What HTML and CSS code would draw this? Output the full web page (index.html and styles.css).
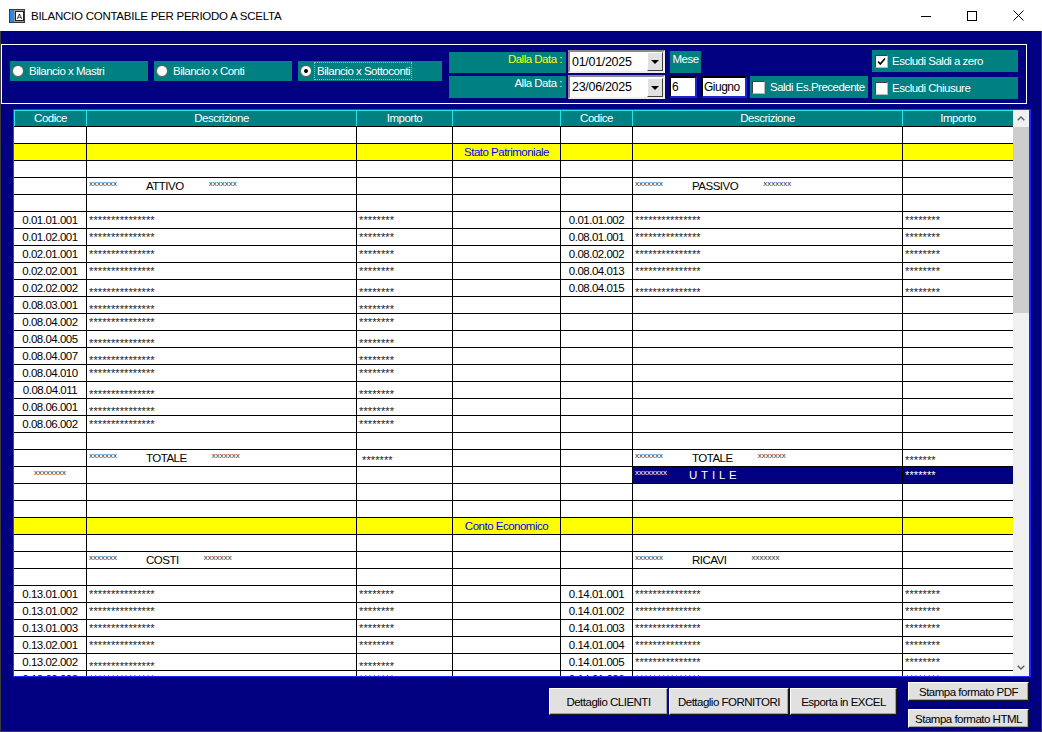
FILE: index.html
```html
<!DOCTYPE html>
<html lang="it">
<head>
<meta charset="utf-8">
<title>Bilancio contabile per periodo a scelta</title>
<link rel="stylesheet" href="styles.css">
</head>
<body>
<div class="window">
  <header class="titlebar">
    <svg class="app-icon" width="16" height="14" viewBox="0 0 16 14">
      <rect x="0.5" y="0.5" width="15" height="13" fill="#9a9a9a" stroke="#3a3a3a"/>
      <rect x="1" y="1" width="4" height="12" fill="#2f86e0"/>
      <rect x="6.5" y="2.5" width="8" height="9" fill="#ffffff" stroke="#202020"/>
      <text x="10.5" y="10" font-size="8" text-anchor="middle" font-family="Liberation Sans, Arial, sans-serif" fill="#000">A</text>
    </svg>
    <span class="title">BILANCIO CONTABILE PER PERIODO A SCELTA</span>
    <div class="wincontrols">
      <span class="wbtn"><svg width="10" height="10" viewBox="0 0 10 10"><line x1="0" y1="5.5" x2="10" y2="5.5" stroke="#000" stroke-width="1"/></svg></span>
      <span class="wbtn"><svg width="10" height="10" viewBox="0 0 10 10"><rect x="0.5" y="0.5" width="9" height="9" fill="none" stroke="#000" stroke-width="1"/></svg></span>
      <span class="wbtn"><svg width="11" height="11" viewBox="0 0 11 11"><path d="M0.5 0.5L10.5 10.5M10.5 0.5L0.5 10.5" stroke="#000" stroke-width="1" fill="none"/></svg></span>
    </div>
  </header>

  <main class="client">
    <section class="filters">
      <label class="radio"><span class="dot"></span><span>Bilancio x Mastri</span></label>
      <label class="radio"><span class="dot"></span><span>Bilancio x Conti</span></label>
      <label class="radio wide"><span class="dot on"></span><span class="focus">Bilancio x Sottoconti</span></label>

      <div class="dates">
        <div class="lab from">Dalla Data :</div>
        <div class="date d1"><span class="dv">01/01/2025</span><span class="dd"></span></div>
        <div class="mese">Mese</div>
        <div class="chk ex1"><span class="cb on"><svg width="11" height="11" viewBox="0 0 11 11"><path d="M2 5.5L4.3 8L9 2.5" stroke="#000" stroke-width="1.6" fill="none"/></svg></span><span class="cbl">Escludi Saldi a zero</span></div>

        <div class="lab to">Alla Data :</div>
        <div class="date d2"><span class="dv">23/06/2025</span><span class="dd"></span></div>
        <div class="box m">6</div>
        <div class="box mn">Giugno</div>
        <div class="chk saldi"><span class="cb"></span><span class="cbl">Saldi Es.Precedente</span></div>
        <div class="chk ex2"><span class="cb"></span><span class="cbl">Escludi Chiusure</span></div>
      </div>
    </section>

    <section class="frame">
      <div class="grid">
        <div class="hdr"><span>Codice</span><span>Descrizione</span><span>Importo</span><span></span><span>Codice</span><span>Descrizione</span><span>Importo</span></div>

        <div class="r"><span></span><span></span><span></span><span></span><span></span><span></span><span></span></div>
        <div class="r y"><span></span><span></span><span></span><span class="sec">Stato Patrimoniale</span><span></span><span></span><span></span></div>
        <div class="r"><span></span><span></span><span></span><span></span><span></span><span></span><span></span></div>
        <div class="r"><span></span><span class="lbl"><span class="xs">xxxxxxx</span><span class="lb">ATTIVO</span><span class="xs">xxxxxxx</span></span><span></span><span></span><span></span><span class="lbl"><span class="xs">xxxxxxx</span><span class="lb">PASSIVO</span><span class="xs">xxxxxxx</span></span><span></span></div>
        <div class="r"><span></span><span></span><span></span><span></span><span></span><span></span><span></span></div>

        <div class="r"><span class="c">0.01.01.001</span><span class="st">***************</span><span class="st">********</span><span></span><span class="c">0.01.01.002</span><span class="st">***************</span><span class="st">********</span></div>
        <div class="r"><span class="c">0.01.02.001</span><span class="st">***************</span><span class="st">********</span><span></span><span class="c">0.08.01.001</span><span class="st">***************</span><span class="st">********</span></div>
        <div class="r"><span class="c">0.02.01.001</span><span class="st">***************</span><span class="st">********</span><span></span><span class="c">0.08.02.002</span><span class="st">***************</span><span class="st">********</span></div>
        <div class="r"><span class="c">0.02.02.001</span><span class="st">***************</span><span class="st">********</span><span></span><span class="c">0.08.04.013</span><span class="st">***************</span><span class="st">********</span></div>
        <div class="r"><span class="c">0.02.02.002</span><span class="st lo">***************</span><span class="st lo">********</span><span></span><span class="c">0.08.04.015</span><span class="st lo">***************</span><span class="st lo">********</span></div>
        <div class="r"><span class="c">0.08.03.001</span><span class="st lo">***************</span><span class="st lo">********</span><span></span><span></span><span></span><span></span></div>
        <div class="r"><span class="c">0.08.04.002</span><span class="st">***************</span><span class="st">********</span><span></span><span></span><span></span><span></span></div>
        <div class="r"><span class="c">0.08.04.005</span><span class="st lo">***************</span><span class="st lo">********</span><span></span><span></span><span></span><span></span></div>
        <div class="r"><span class="c">0.08.04.007</span><span class="st lo">***************</span><span class="st lo">********</span><span></span><span></span><span></span><span></span></div>
        <div class="r"><span class="c">0.08.04.010</span><span class="st">***************</span><span class="st">********</span><span></span><span></span><span></span><span></span></div>
        <div class="r"><span class="c">0.08.04.011</span><span class="st lo">***************</span><span class="st lo">********</span><span></span><span></span><span></span><span></span></div>
        <div class="r"><span class="c">0.08.06.001</span><span class="st lo">***************</span><span class="st lo">********</span><span></span><span></span><span></span><span></span></div>
        <div class="r"><span class="c">0.08.06.002</span><span class="st">***************</span><span class="st">********</span><span></span><span></span><span></span><span></span></div>
        <div class="r"><span></span><span></span><span></span><span></span><span></span><span></span><span></span></div>

        <div class="r"><span></span><span class="lbl"><span class="xs">xxxxxxx</span><span class="lb">TOTALE</span><span class="xs">xxxxxxx</span></span><span class="st mid tl">*******</span><span></span><span></span><span class="lbl"><span class="xs">xxxxxxx</span><span class="lb">TOTALE</span><span class="xs">xxxxxxx</span></span><span class="st mid">*******</span></div>
        <div class="r"><span class="c xc"><span class="xs">xxxxxxxx</span></span><span></span><span></span><span></span><span></span><span class="lbl nv"><span class="xs">xxxxxxxx</span><span class="lb ut">U T I L E</span></span><span class="st nv">*******</span></div>
        <div class="r"><span></span><span></span><span></span><span></span><span></span><span></span><span></span></div>
        <div class="r"><span></span><span></span><span></span><span></span><span></span><span></span><span></span></div>
        <div class="r y"><span></span><span></span><span></span><span class="sec">Conto Economico</span><span></span><span></span><span></span></div>
        <div class="r"><span></span><span></span><span></span><span></span><span></span><span></span><span></span></div>
        <div class="r"><span></span><span class="lbl"><span class="xs">xxxxxxx</span><span class="lb">COSTI</span><span class="xs">xxxxxxx</span></span><span></span><span></span><span></span><span class="lbl"><span class="xs">xxxxxxx</span><span class="lb">RICAVI</span><span class="xs">xxxxxxx</span></span><span></span></div>
        <div class="r"><span></span><span></span><span></span><span></span><span></span><span></span><span></span></div>

        <div class="r"><span class="c">0.13.01.001</span><span class="st">***************</span><span class="st">********</span><span></span><span class="c">0.14.01.001</span><span class="st">***************</span><span class="st">********</span></div>
        <div class="r"><span class="c">0.13.01.002</span><span class="st">***************</span><span class="st">********</span><span></span><span class="c">0.14.01.002</span><span class="st">***************</span><span class="st">********</span></div>
        <div class="r"><span class="c">0.13.01.003</span><span class="st">***************</span><span class="st">********</span><span></span><span class="c">0.14.01.003</span><span class="st">***************</span><span class="st">********</span></div>
        <div class="r"><span class="c">0.13.02.001</span><span class="st">***************</span><span class="st">********</span><span></span><span class="c">0.14.01.004</span><span class="st">***************</span><span class="st">********</span></div>
        <div class="r"><span class="c">0.13.02.002</span><span class="st lo">***************</span><span class="st lo">********</span><span></span><span class="c">0.14.01.005</span><span class="st">***************</span><span class="st">********</span></div>
        <div class="r"><span class="c">0.13.02.003</span><span class="st">***************</span><span class="st">********</span><span></span><span class="c">0.14.01.006</span><span class="st">***************</span><span class="st">********</span></div>
      </div>
      <div class="vs">
        <span class="arr"><svg width="8" height="5" viewBox="0 0 8 5"><path d="M0.7 4.3L4 1L7.3 4.3" stroke="#606060" stroke-width="1.4" fill="none"/></svg></span>
        <span class="thumb"></span>
        <span class="fill"></span>
        <span class="arr"><svg width="8" height="5" viewBox="0 0 8 5"><path d="M0.7 0.7L4 4L7.3 0.7" stroke="#606060" stroke-width="1.4" fill="none"/></svg></span>
      </div>
    </section>

    <footer class="footer">
      <div class="btns">
        <button class="btn b1">Dettaglio CLIENTI</button>
        <button class="btn b2">Dettaglio FORNITORI</button>
        <button class="btn b3">Esporta in EXCEL</button>
      </div>
      <div class="stack">
        <button class="btn">Stampa formato PDF</button>
        <button class="btn">Stampa formato HTML</button>
      </div>
    </footer>
  </main>
</div>
</body>
</html>
```

FILE: styles.css
```css
* { box-sizing: border-box; }
html, body { margin: 0; padding: 0; }
body {
  width: 1042px;
  height: 732px;
  overflow: hidden;
  background: #000080;
  font-family: "Liberation Sans", Arial, sans-serif;
  font-size: 11.5px;
  letter-spacing: -0.5px;
  color: #000;
}
.window { width: 1042px; height: 732px; display: flex; flex-direction: column; }

/* title bar */
.titlebar { flex: none; height: 31px; background: #fff; display: flex; align-items: center; letter-spacing: 0; }
.app-icon { margin-left: 9px; flex: none; }
.title { margin-left: 6px; font-size: 11.5px; letter-spacing: -0.25px; color: #000; }
.wincontrols { margin-left: auto; margin-right: 1px; display: flex; }
.wbtn { width: 46px; height: 31px; display: flex; align-items: center; justify-content: center; }

/* client area */
.client {
  flex: 1;
  min-height: 0;
  background: #000080;
  border: 1px solid #3c3c3c;
  border-top: 0;
  display: flex;
  flex-direction: column;
}

/* filter panel */
.filters {
  flex: none;
  margin-top: 13px;
  width: 1026px;
  height: 60px;
  border: 1px solid #fff;
  padding: 5px 0 0 8px;
  display: flex;
  align-items: flex-start;
  white-space: nowrap;
}
.radio {
  flex: none;
  width: 138px;
  height: 20px;
  margin: 11px 6px 0 0;
  background: #008080;
  color: #fff;
  display: flex;
  align-items: center;
  line-height: 14px;
}
.radio.wide { width: 144px; margin-right: 7px; }
.dot {
  flex: none;
  width: 12px;
  height: 12px;
  border-radius: 50%;
  background: #fff;
  border: 1px solid #5a5a5a;
  margin: 0 5px 0 2px;
  display: flex;
  align-items: center;
  justify-content: center;
}
.dot.on::after { content: ""; width: 4px; height: 4px; border-radius: 50%; background: #000; }
.focus { margin-left: -2px; padding: 1px 1px 1px 2px; outline: 1px dotted #e0a080; }

.dates {
  display: grid;
  grid-template-columns: 117px 2px 97px 4px 28px 4px 46px 3px 118px 4px 146px;
  grid-template-rows: 25px 24px;
}
.lab { grid-column: 1; background: #008080; text-align: right; padding-right: 4px; line-height: 14px; }
.lab.from { grid-row: 1; margin-top: 2px; height: 21px; color: #ffff00; }
.lab.to { grid-row: 2; margin-top: 1px; height: 22px; color: #fff; }

.date {
  grid-column: 3;
  background: #fff;
  border: 2px solid;
  border-color: #8a8a8a #ececec #ececec #8a8a8a;
  display: flex;
  align-items: center;
  padding-left: 2px;
}
.dv { flex: 1; font-size: 12.5px; letter-spacing: -0.3px; }
.date.d1 { grid-row: 1; height: 23px; }
.date.d2 { grid-row: 2; height: 24px; }
.dd {
  flex: none;
  width: 16px;
  height: 19px;
  background: #e1e1e1;
  border: 1px solid;
  border-color: #fff #404040 #404040 #fff;
  display: flex;
  align-items: center;
  justify-content: center;
}
.dd::after { content: ""; border-left: 4px solid transparent; border-right: 4px solid transparent; border-top: 4px solid #000; margin-top: 1px; }

.mese {
  grid-column: 5;
  grid-row: 1;
  width: 31px;
  height: 22px;
  margin: 1px 0 0 1px;
  background: #008080;
  color: #fff;
  text-align: center;
  line-height: 16px;
}
.box {
  grid-row: 2;
  height: 22px;
  margin-top: 1px;
  background: #fff;
  border: 2px solid;
  border-color: #000 #2222d0 #2222d0 #000;
  padding-left: 1px;
  line-height: 18px;
  font-size: 12px;
}
.box.m { grid-column: 5; }
.box.mn { grid-column: 7; }

.chk { background: #008080; color: #fff; display: flex; align-items: center; height: 22px; overflow: hidden; }
.chk.saldi { grid-column: 9; grid-row: 2; margin-top: 1px; padding-left: 2px; }
.chk.ex1 { grid-column: 11; grid-row: 1; padding-left: 3px; }
.chk.ex2 { grid-column: 11; grid-row: 2; margin-top: 2px; padding-left: 3px; }
.cb {
  flex: none;
  width: 13px;
  height: 13px;
  background: #fff;
  border: 1px solid;
  border-color: #404040 #b8b8b8 #b8b8b8 #404040;
  display: flex;
  align-items: center;
  justify-content: center;
}
.cbl { margin-left: 5px; }
.ex1 .cbl, .ex2 .cbl { margin-left: 4px; }

/* grid frame */
.frame {
  flex: none;
  margin: 5px 0 0 12px;
  width: 1018px;
  height: 568px;
  border-style: solid;
  border-width: 1px 2px 1px 1px;
  border-color: #505050 #2424ff #2424ff #505050;
  display: flex;
  background: #fff;
}
.grid { width: 999px; height: 566px; overflow: hidden; }
.hdr {
  display: grid;
  grid-template-columns: 72px 270px 96px 108px 72px 270px 111px;
  height: 17px;
  background: #008080;
  border-top: 1px solid #22e4e4;
  border-bottom: 1px solid #000;
  color: #fff;
}
.hdr span { border-left: 1px solid #22e4e4; text-align: center; line-height: 15px; }

.r {
  display: grid;
  grid-template-columns: 73px 270px 96px 108px 72px 270px 110px;
  height: 17px;
  border-bottom: 1px solid #000;
  background: #fff;
}
.r > span {
  display: block;
  height: 16px;
  border-right: 1px solid #000;
  overflow: hidden;
  white-space: nowrap;
  line-height: 16px;
}
.r > span:last-child { border-right: 0; }
.r.y > span { background: #ffff00; }
.c { text-align: center; }
.sec { text-align: center; color: #0000ff; }
.r > span.st {
  overflow: visible;
  font-size: 11px;
  color: #222;
  padding-left: 2px;
  letter-spacing: 0.1px;
}
.r > span.st.lo { padding-top: 4px; }
.r > span.st.mid { padding-top: 2px; }
.r > span.st.tl { padding-left: 5px; }
.lbl { padding-left: 2px; }
.xs {
  font-size: 8px;
  line-height: 12px;
  letter-spacing: 0;
  vertical-align: top;
  color: #333;
}
.lb { margin: 0 25px 0 29px; }
.lb.ut { margin-left: 22px; letter-spacing: 0.4px; }
.r > span.nv { background: #000080; color: #fff; }
.nv .xs { color: #fff; }

/* scrollbar */
.vs { flex: none; width: 16px; background: #f0f0f0; display: flex; flex-direction: column; }
.arr { flex: none; height: 17px; display: flex; align-items: center; justify-content: center; }
.thumb { flex: none; height: 186px; background: #cdcdcd; }
.fill { flex: 1; }

/* footer buttons */
.footer { flex: none; display: flex; justify-content: flex-end; align-items: flex-start; padding: 5px 12px 0 0; }
.btns { display: flex; gap: 1px; margin: 6px 11px 0 0; }
.btn {
  height: 27px;
  padding: 0;
  background: #e1e1e1;
  border: 1px solid;
  border-color: #fff #1a1a1a #1a1a1a #fff;
  box-shadow: inset -1px -1px #a0a0a0;
  font-family: "Liberation Sans", Arial, sans-serif;
  font-size: 11.5px;
  letter-spacing: -0.5px;
  white-space: nowrap;
  color: #000;
  display: flex;
  align-items: center;
  justify-content: center;
}
.b1 { width: 119px; }
.b2 { width: 120px; }
.b3 { width: 107px; }
.stack { display: flex; flex-direction: column; gap: 8px; width: 121px; }
.stack .btn { height: 19px; width: 121px; }
```
